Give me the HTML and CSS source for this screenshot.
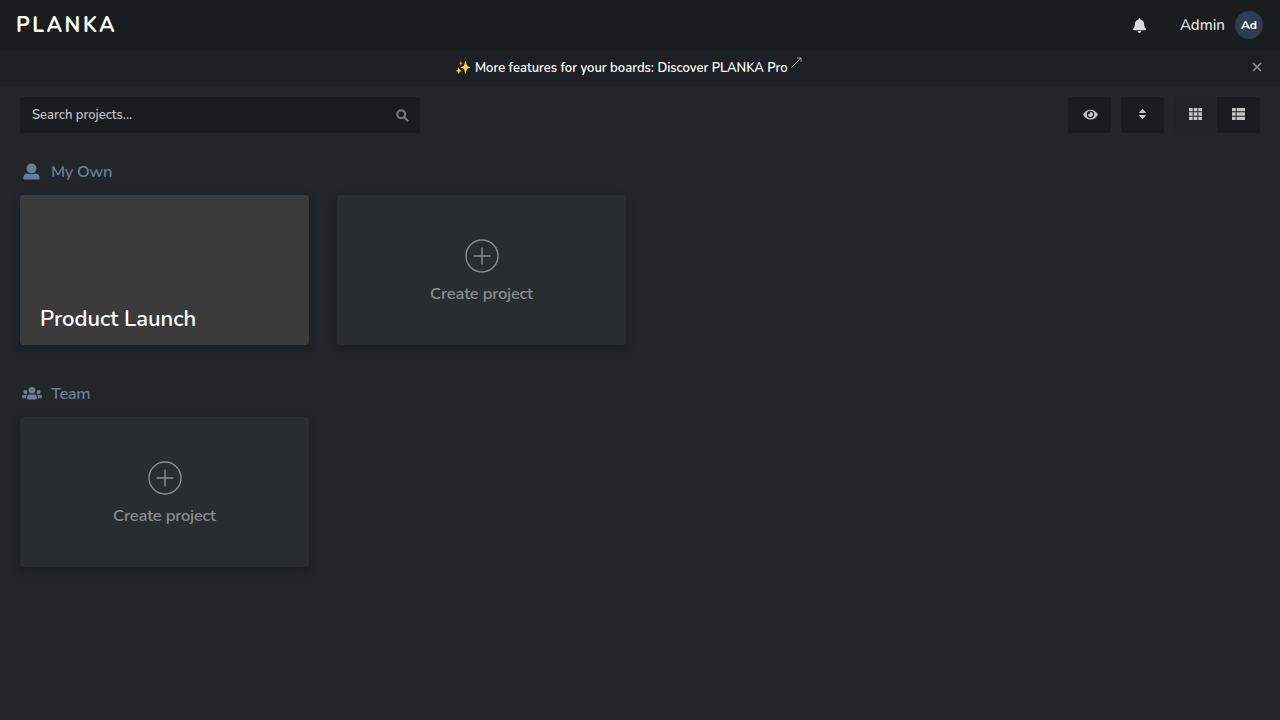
FILE: index.html
```html
<!DOCTYPE html>
<html lang="en">
<head>
    <meta charset="UTF-8">
    <meta name="viewport" content="width=device-width, initial-scale=1.0">
    <title>PLANKA</title>
    <link rel="stylesheet" href="styles.css">
</head>
<body>
    <header class="header">
        <a class="logo">PLANKA</a>
        <div class="header-menu">
            <svg class="bell" viewBox="0 0 448 512"><path d="M224 512c35 0 64-29 64-64H160c0 35 29 64 64 64zm215-149c-19-21-55-52-55-155 0-78-54-140-128-155V32a32 32 0 0 0-64 0v21C118 68 64 130 64 208c0 103-36 134-55 155-6 6-9 14-9 21 0 16 13 32 32 32h384c19 0 32-16 32-32 0-7-3-15-9-21z"/></svg>
            <span class="user-name">Admin</span>
            <span class="avatar">Ad</span>
        </div>
    </header>

    <div class="banner">
        <span class="banner-text">✨ More features for your boards: Discover PLANKA Pro</span>
        <svg class="arrow" viewBox="0 0 11 11"><path d="M.5 10.500 10 1M6.300 1H10v3.700"/></svg>
        <svg class="close" viewBox="0 0 10 10"><path d="m1 1 8 8m0-8-8 8"/></svg>
    </div>

    <main class="content">
        <div class="toolbar">
            <div class="search">
                <span class="search-text">Search projects...</span>
                <svg class="search-icon" viewBox="0 0 13 13"><circle cx="5.200" cy="5.200" r="3.900"/><path d="m8.200 8.200 4 4"/></svg>
            </div>
            <div class="actions">
                <button class="button"><svg class="eye" viewBox="0 0 576 512"><path d="M572 241C518 136 411 64 288 64S58 136 4 241a32 32 0 0 0 0 30c54 105 161 177 284 177s230-72 284-177a32 32 0 0 0 0-30zM288 400a144 144 0 1 1 0-288 144 144 0 0 1 0 288zm0-240c-9 0-17 1-25 4a48 48 0 0 1-67 67 96 96 0 1 0 92-71z"/></svg></button>
                <button class="button"><svg class="sort" viewBox="0 0 9 12"><path d="M4.500.7 7.800 4.300q.5.8-.4.8H1.600q-.9 0-.4-.8zM4.500 11.300 1.200 7.700q-.5-.8.4-.8h5.800q.9 0 .4.800z"/></svg></button>
                <div class="button-group">
                    <button class="button active"><svg class="view" viewBox="0 0 13 12"><path d="M0 0h3.700v3.300H0zM4.600 0h3.800v3.300H4.600zM9.300 0H13v3.300H9.300zM0 4.300h3.700v3.400H0zM4.600 4.300h3.800v3.400H4.600zM9.300 4.300H13v3.400H9.300zM0 8.700h3.700V12H0zM4.600 8.700h3.800V12H4.600zM9.300 8.700H13V12H9.300z"/></svg></button>
                    <button class="button"><svg class="view" viewBox="0 0 13 12"><path d="M0 0h3.700v3.300H0zM4.600 0H13v3.300H4.600zM0 4.300h3.700v3.400H0zM4.600 4.300H13v3.400H4.600zM0 8.700h3.700V12H0zM4.600 8.700H13V12H4.600z"/></svg></button>
                </div>
            </div>
        </div>

        <section class="group">
            <h2 class="group-title">
                <svg class="group-icon" viewBox="0 0 20 18"><circle cx="9.500" cy="5.500" r="5"/><path d="M1.300 15.200c0-3 1.500-4.700 4.300-4.700 2.300 1 5.500 1 7.800 0 2.800 0 4.300 1.700 4.300 4.700q0 1.300-1.300 1.300H2.600q-1.300 0-1.300-1.300z"/></svg>
                <span>My Own</span>
            </h2>
            <div class="cards">
                <div class="card project">
                    <span class="project-name">Product Launch</span>
                </div>
                <div class="card create">
                    <svg class="plus" viewBox="0 0 34 34"><circle cx="17" cy="17" r="16"/><path d="M17 8.500v17M8.500 17h17"/></svg>
                    <span class="create-text">Create project</span>
                </div>
            </div>
        </section>

        <section class="group">
            <h2 class="group-title">
                <svg class="group-icon" viewBox="0 0 20 18"><circle cx="10" cy="5.300" r="3.300"/><circle cx="3.400" cy="7" r="2"/><circle cx="16.600" cy="7" r="2"/><path d="M5 13.500c0-2.700 1-4.300 3-4.300 1.300.6 2.700.6 4 0 2 0 3 1.600 3 4.300q0 1-1 1H6q-1 0-1-1zM0 12.500v-.8c0-1.300.7-2 2-2h2.900c-.6.9-.8 1.800-.8 3.500H.8q-.8 0-.8-.7zM20 12.500v-.8c0-1.300-.7-2-2-2h-2.900c.6.9.8 1.800.8 3.500h3.300q.8 0 .8-.7z"/></svg>
                <span>Team</span>
            </h2>
            <div class="cards">
                <div class="card create">
                    <svg class="plus" viewBox="0 0 34 34"><circle cx="17" cy="17" r="16"/><path d="M17 8.500v17M8.500 17h17"/></svg>
                    <span class="create-text">Create project</span>
                </div>
            </div>
        </section>
    </main>
</body>
</html>
```
FILE: styles.css
```css
* {
    box-sizing: border-box;
}
body {
    margin: 0;
    min-height: 100vh;
    background: #22252a;
    color: #fff;
    font-family: Nunito, Lato, sans-serif;
    font-weight: 600;
    white-space: nowrap;
}
svg {
    display: block;
    flex: none;
    fill: currentColor;
}
.header {
    display: flex;
    align-items: center;
    justify-content: space-between;
    height: 50px;
    padding: 0 17px 0 16px;
    background: #191d1f;
}
.logo {
    padding-bottom: 1px;
    font-size: 21px;
    font-weight: 700;
    line-height: 30px;
    letter-spacing: 2.6px;
}
.header-menu {
    display: flex;
    align-items: center;
    color: #dcdcdc;
}
.bell {
    width: 13px;
    height: 15px;
    margin-right: 34px;
}
.user-name {
    font-size: 15px;
    line-height: 20px;
    margin-right: 10px;
}
.avatar {
    width: 28px;
    height: 28px;
    border-radius: 50%;
    background: #2c3e50;
    color: #fff;
    font-size: 12px;
    font-weight: 700;
    line-height: 28px;
    text-align: center;
}
.banner {
    position: relative;
    display: flex;
    align-items: center;
    justify-content: center;
    height: 32px;
    padding: 3px 22px 0 0;
    background: #1c1f24;
}
.banner-text {
    font-size: 13px;
    line-height: 20px;
}
.arrow {
    width: 11px;
    height: 11px;
    margin: 0 1px 10px 3px;
    fill: none;
    stroke: #a5a7a9;
}
.close {
    position: absolute;
    top: 12px;
    right: 18px;
    width: 10px;
    height: 10px;
    fill: none;
    stroke: #8c8e90;
    stroke-width: 1.7;
}
.content {
    padding: 15px 20px;
}
.toolbar {
    display: flex;
    justify-content: space-between;
}
.search {
    display: flex;
    align-items: center;
    justify-content: space-between;
    width: 400px;
    height: 36px;
    padding: 0 11px 0 12px;
    border-radius: 3px;
    background: #191d1f;
    color: #bfc0c0;
}
.search-text {
    font-size: 13px;
    line-height: 20px;
}
.search-icon {
    width: 13px;
    height: 13px;
    fill: none;
    stroke: #747778;
    stroke-width: 2.2;
}
.actions {
    display: flex;
    gap: 10px;
}
.button {
    display: flex;
    align-items: center;
    justify-content: center;
    width: 43px;
    height: 36px;
    padding: 0 0 2px;
    border: 0;
    border-radius: 3px;
    background: #191d1f;
    color: #c4c4c4;
}
.button-group {
    display: flex;
    overflow: hidden;
    border-radius: 3px;
}
.button-group .button {
    border-radius: 0;
}
.button-group .active {
    background: #202328;
}
.eye {
    width: 15px;
    height: 13px;
    margin-left: 1px;
}
.sort {
    width: 9px;
    height: 12px;
}
.view {
    width: 13px;
    height: 12px;
}
.group {
    height: 222px;
    padding-top: 29px;
}
.group-title {
    display: flex;
    align-items: center;
    gap: 9px;
    height: 20px;
    margin: 0 0 13px;
    padding-left: 2px;
    color: #6a808f;
    font-size: 16.5px;
    font-weight: 600;
    line-height: 20px;
    letter-spacing: -0.4px;
}
.group-icon {
    width: 20px;
    height: 18px;
}
.cards {
    display: grid;
    grid-template-columns: repeat(4, 1fr);
    gap: 28px;
}
.card {
    display: flex;
    flex-direction: column;
    height: 150px;
    border-radius: 4px;
    box-shadow: 0 4px 12px rgba(0, 0, 0, 0.2);
}
.project {
    justify-content: flex-end;
    padding: 0 20px 12px;
    background: #3b3b3b;
}
.project-name {
    font-size: 22px;
    line-height: 28px;
}
.create {
    align-items: center;
    padding-top: 44px;
    background: #282d30;
    color: #8b8e90;
}
.plus {
    width: 34px;
    height: 34px;
    fill: none;
    stroke: #8b8e90;
    stroke-width: 1.4;
}
.create-text {
    margin-top: 11px;
    font-size: 16.5px;
    line-height: 20px;
    letter-spacing: -0.22px;
}
```
